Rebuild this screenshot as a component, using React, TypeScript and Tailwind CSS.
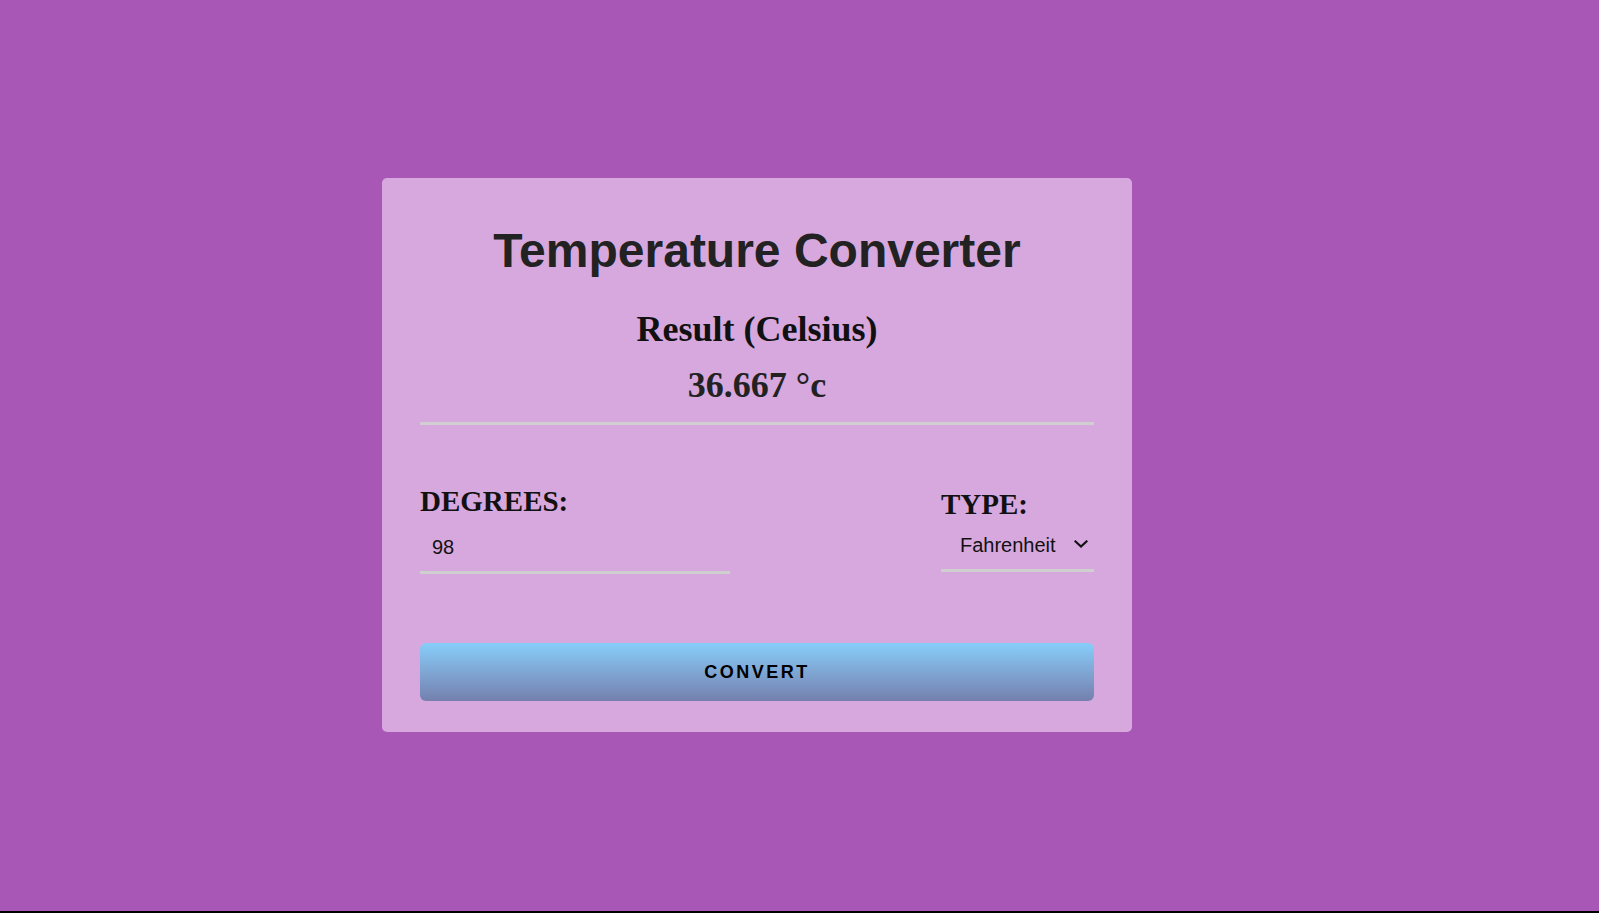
import React from "react";

export default function App() {
  return (
    <div className="h-[913px] w-full overflow-hidden border-b-2 border-black bg-[#a857b7] pl-[382px] pt-[178px]">
      <div className="w-[750px] rounded-[5px] bg-[#d6a8de] px-[38px] pt-[49px] pb-[31px]">
        <h1
          className="text-center text-[48px] font-bold leading-[48px] text-[#222222]"
          style={{ fontFamily: '"Liberation Sans", Arial, sans-serif' }}
        >
          Temperature Converter
        </h1>
        <div style={{ fontFamily: '"Liberation Serif", "Times New Roman", serif' }}>
          <h2 className="mt-[36px] text-center text-[36px] font-bold leading-[36px] text-[#111111]">
            Result (Celsius)
          </h2>
          <p className="mt-[20px] text-center text-[36px] font-bold leading-[36px] text-[#222222]">
            36.667 °c
          </p>
        </div>
        <div className="mt-[19px] h-[3px] w-full bg-[#cfcfcf]" />

        <div className="mt-[62px] flex items-center justify-between">
          <div className="flex flex-col">
            <label
              className="text-[29px] font-bold leading-[28px] text-[#111111]"
              style={{ fontFamily: '"Liberation Serif", "Times New Roman", serif' }}
            >
              DEGREES:
            </label>
            <input
              type="text"
              defaultValue="98"
              className="mt-[8px] h-[51px] w-[310px] border-b-[3px] border-[#cfcfcf] bg-transparent pl-3 text-[20px] text-[#111111] outline-none"
              style={{ fontFamily: '"Liberation Sans", Arial, sans-serif' }}
            />
          </div>
          <div className="flex flex-col">
            <label
              className="text-[29px] font-bold leading-[28px] text-[#111111]"
              style={{ fontFamily: '"Liberation Serif", "Times New Roman", serif' }}
            >
              TYPE:
            </label>
            <div
              className="mt-[3px] flex h-[51px] w-[153px] items-center justify-between border-b-[3px] border-[#cfcfcf] pl-[19px] pr-[6px] text-[20px] text-[#111111]"
              style={{ fontFamily: '"Liberation Sans", Arial, sans-serif' }}
            >
              <span>Fahrenheit</span>
              <svg width="14" height="8" viewBox="0 0 14 8" fill="none" className="mb-[1px]">
                <path d="M1.5 1.5 L7 6.5 L12.5 1.5" stroke="#111111" strokeWidth="2.2" strokeLinecap="square" />
              </svg>
            </div>
          </div>
        </div>

        <button
          className="mt-[69px] flex h-[58px] w-full items-center justify-center rounded-[6px] bg-gradient-to-b from-[#87cefa] to-[#7480ae] text-[18px] font-bold tracking-[2.5px] text-black"
          style={{ fontFamily: '"Liberation Sans", Arial, sans-serif' }}
        >
          CONVERT
        </button>
      </div>
    </div>
  );
}
